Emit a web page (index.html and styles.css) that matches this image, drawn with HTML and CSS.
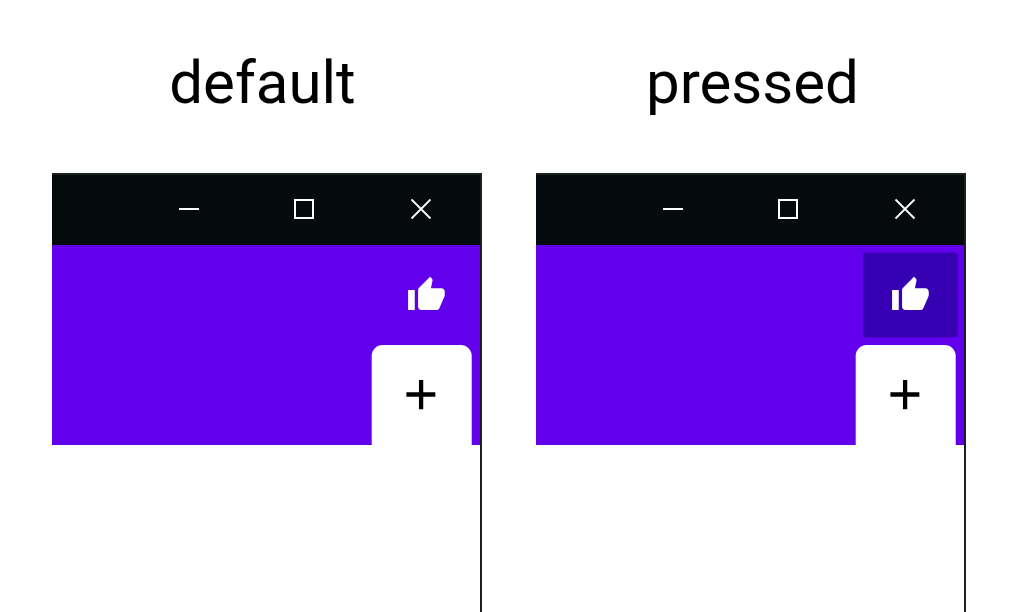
FILE: index.html
```html
<!DOCTYPE html>
<html lang="en">
<head>
<meta charset="utf-8">
<title>Button states</title>
<link rel="stylesheet" href="styles.css">
</head>
<body>
<svg class="defs" aria-hidden="true">
  <symbol id="minimize" viewBox="0 0 24 24"><path d="M2 12h20" fill="none" stroke="currentColor" stroke-width="2"/></symbol>
  <symbol id="maximize" viewBox="0 0 24 24"><path d="M3 3h18v18H3z" fill="none" stroke="currentColor" stroke-width="2"/></symbol>
  <symbol id="close" viewBox="0 0 24 24"><path d="M2.5 2.5l19 19M21.5 2.5l-19 19" fill="none" stroke="currentColor" stroke-width="1.8"/></symbol>
  <symbol id="thumb" viewBox="-.25 -.3 24 24"><path d="M1 21h4V9H1v12zm22-11c0-1.1-.9-2-2-2h-6.31l.95-4.57.03-.32c0-.41-.17-.79-.44-1.06L14.17 1 7.59 7.59C7.22 7.95 7 8.45 7 9v10c0 1.1.9 2 2 2h9c.83 0 1.54-.5 1.84-1.22l3.02-7.05c.09-.23.14-.47.14-.73v-2z" fill="currentColor"/></symbol>
  <symbol id="plus" viewBox="-.3 0 30 30"><path d="M.4 14.5H29.7M15.1 0v29.2" fill="none" stroke="currentColor" stroke-width="4.3"/></symbol>
</svg>
<main class="states">
  <section class="state">
    <h1 class="label">default</h1>
    <div class="window">
      <div class="titlebar">
        <svg class="control"><use href="#minimize"/></svg>
        <svg class="control"><use href="#maximize"/></svg>
        <svg class="control"><use href="#close"/></svg>
      </div>
      <div class="toolbar">
        <div class="action"><svg class="thumb"><use href="#thumb"/></svg></div>
        <div class="tab"><svg class="plus"><use href="#plus"/></svg></div>
      </div>
    </div>
  </section>
  <section class="state">
    <h1 class="label label-pressed">pressed</h1>
    <div class="window">
      <div class="titlebar">
        <svg class="control"><use href="#minimize"/></svg>
        <svg class="control"><use href="#maximize"/></svg>
        <svg class="control"><use href="#close"/></svg>
      </div>
      <div class="toolbar">
        <div class="action pressed"><svg class="thumb"><use href="#thumb"/></svg></div>
        <div class="tab"><svg class="plus"><use href="#plus"/></svg></div>
      </div>
    </div>
  </section>
</main>
</body>
</html>
```
FILE: styles.css
```css
* { box-sizing: border-box; }
body { margin: 0; background: #fff; overflow: hidden; }
svg { display: block; }
.defs { display: none; }
.states { display: flex; gap: 54px; height: 612px; padding-left: 52px; }
.state { display: flex; flex-direction: column; width: 430px; }
.label {
  height: 173px;
  margin: 0;
  padding: 48px 9px 0 0;
  color: #000;
  font: 400 60px/70px Roboto, sans-serif;
  text-align: center;
}
.label-pressed { padding: 48px 0 0 3px; }
.window {
  flex: 1;
  border-top: 2px solid #1c2020;
  border-right: 2px solid #1c2020;
  background: #fff;
}
.titlebar {
  display: flex;
  justify-content: flex-end;
  height: 70px;
  padding: 22px 47px 0 0;
  background: #050b0d;
  color: #fff;
}
.control { width: 24px; height: 24px; margin-right: 93px; }
.control:first-child { margin-right: 91px; }
.control:last-child { margin-right: 0; }
.toolbar {
  display: flex;
  flex-direction: column;
  align-items: flex-end;
  height: 200px;
  padding: 8px 8px 0 0;
  background: #6200ee;
}
.action {
  display: flex;
  width: 95px;
  height: 85px;
  margin: 0 -2px 7px 0;
  padding: 22px 0 0 27px;
  border-radius: 4px;
  color: #fff;
  transform: translateY(-.5px);
}
.pressed { background: #3700b3; }
.thumb { width: 40px; height: 40px; }
.tab {
  display: flex;
  width: 100px;
  height: 100px;
  padding: 35px 0 0 34px;
  border-radius: 11px 11px 0 0;
  background: #fff;
  color: #000;
  transform: translateX(-.3px);
}
.plus { width: 30px; height: 30px; }
```
